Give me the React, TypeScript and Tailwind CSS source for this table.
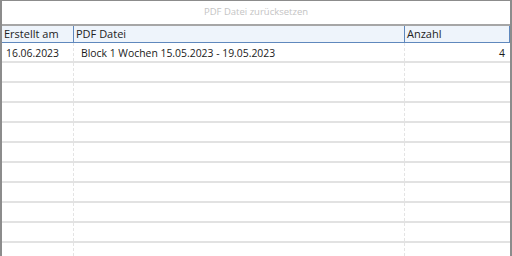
import React from 'react';

interface Row {
  created: string;
  file: string;
  count: string;
}

const rows: Row[] = [
  { created: '16.06.2023', file: 'Block 1 Wochen 15.05.2023 - 19.05.2023', count: '4' },
  ...Array.from({ length: 10 }, () => ({ created: '', file: '', count: '' })),
];

export default function App() {
  return (
    <div className="w-[512px] h-[256px] overflow-hidden bg-white border-t border-l-2 border-r-2 border-[#8c8c8c] font-['Open_Sans',sans-serif]">
      {/* Reset button */}
      <div className="h-[25px] flex items-center justify-center border-b-2 border-[#a6a6a6] text-[9.5px] text-[#c4c4c4]">
        PDF Datei zurücksetzen
      </div>

      {/* Grid header */}
      <div className="flex h-[17px] bg-[#eef4fb] border-b border-[#5f88bd] text-[11px] text-[#222] leading-[16px]">
        <div className="w-[72px] shrink-0 px-[2px] border-r border-[#5f88bd]">Erstellt am</div>
        <div className="w-[331px] shrink-0 px-[2px] border-r border-[#5f88bd]">PDF Datei</div>
        <div className="flex-1 px-[2px] border-r border-[#5f88bd]">Anzahl</div>
      </div>

      {/* Grid rows */}
      {rows.map((row, i) => (
        <div
          key={i}
          className="flex h-[20px] border-b-2 border-[#e2e2e2] text-[10.4px] text-[#1a1a1a] leading-[20px]"
        >
          <div className="w-[72px] shrink-0 pl-[4px] border-r border-dashed border-[#e4e4e4]">
            {row.created}
          </div>
          <div className="w-[331px] shrink-0 pl-[7px] border-r border-dashed border-[#e4e4e4]">
            {row.file}
          </div>
          <div className="flex-1 pr-[5px] text-right">{row.count}</div>
        </div>
      ))}
    </div>
  );
}
